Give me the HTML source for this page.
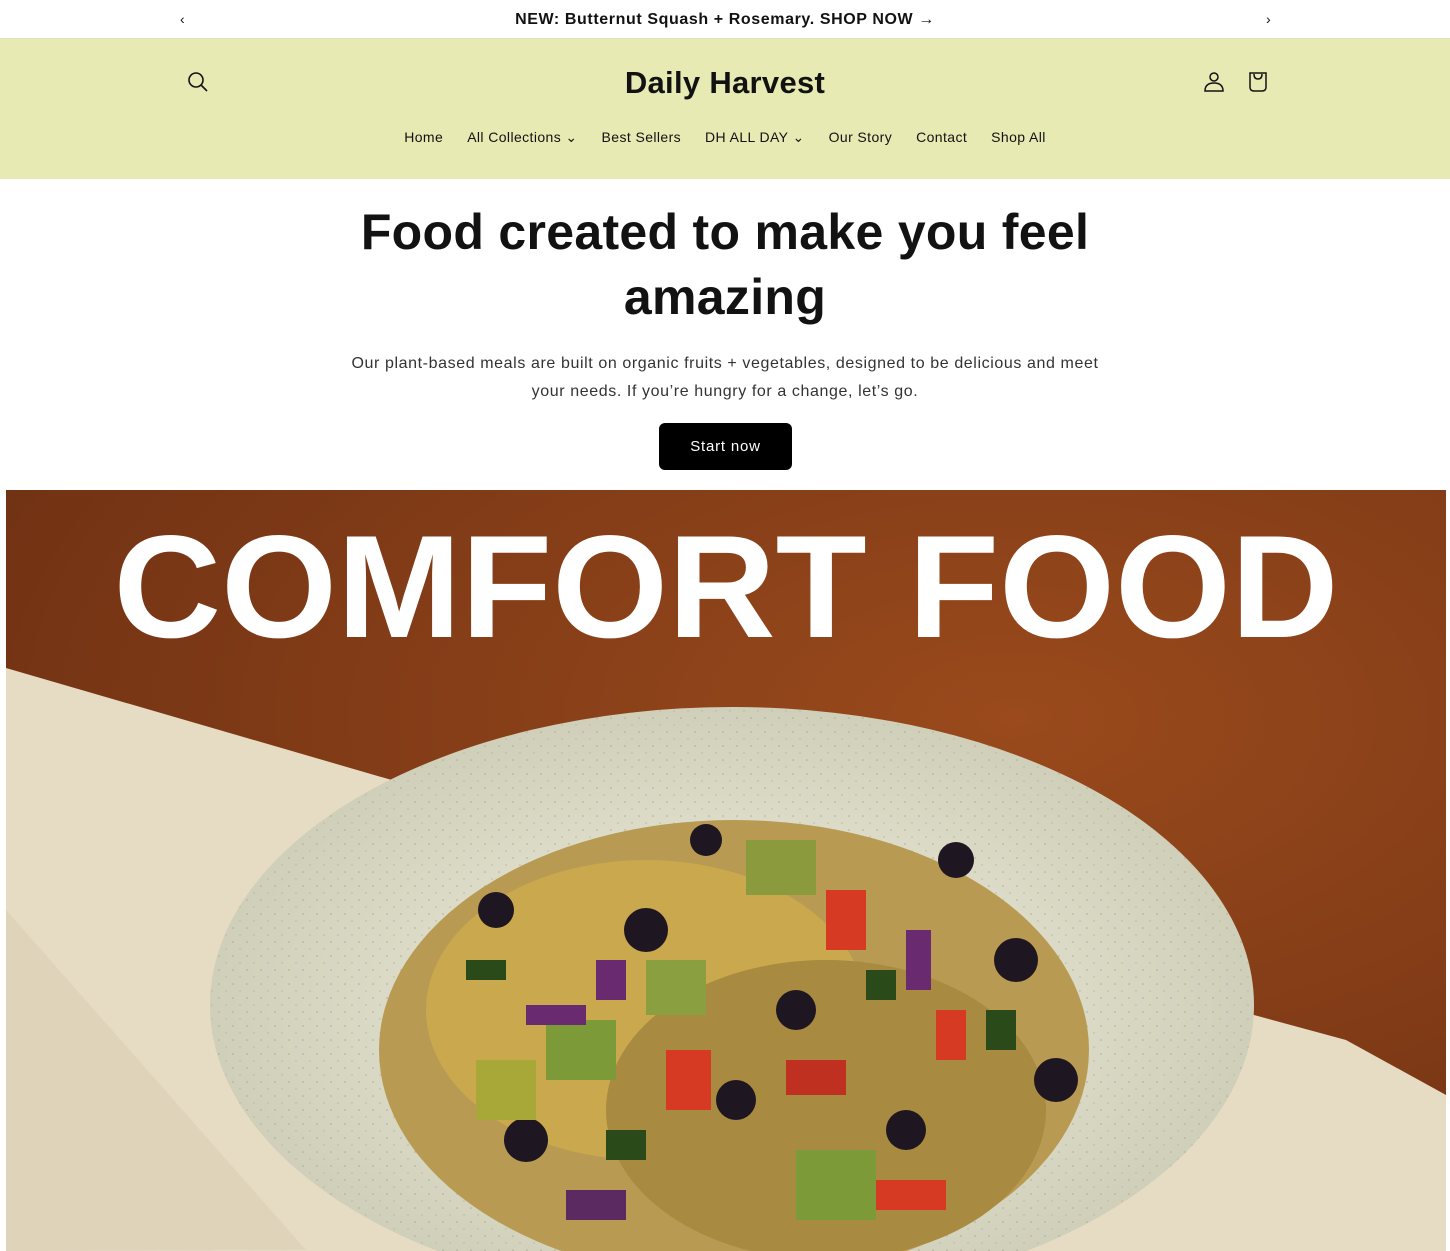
<!DOCTYPE html>
<html><head><meta charset="utf-8">
<style>
*{margin:0;padding:0;box-sizing:border-box}
body{width:1450px;height:1251px;overflow:hidden;background:#fff;font-family:"Liberation Sans",sans-serif;color:#121212}
.ann{height:39px;border-bottom:1px solid #e2e5c0;position:relative;text-align:center;font-size:16px;line-height:39px;font-weight:bold;letter-spacing:.6px}
.ann .l,.ann .r{position:absolute;top:0;font-size:14px;font-weight:normal}
.ann .l{left:180px}.ann .r{left:1266px}
header{background:#e7eab2;height:140px;position:relative}
.logo{position:absolute;top:26px;left:0;width:1450px;text-align:center;font-size:31px;font-weight:bold;letter-spacing:.3px}
nav{position:absolute;top:90px;left:0;width:1450px;text-align:center;font-size:14px;letter-spacing:.4px}
nav span{margin:0 12px}
.ic{position:absolute}
h1{text-align:center;font-size:50px;line-height:65px;font-weight:bold;margin-top:21px;letter-spacing:.3px}
p{text-align:center;font-size:16px;line-height:28px;color:#333;margin-top:20px;letter-spacing:.6px}
.btn{position:absolute;left:659px;top:423px;width:133px;height:47px;background:#000;color:#fff;border-radius:6px;text-align:center;line-height:47px;font-size:15px;letter-spacing:.8px}
.hero{position:absolute;left:6px;top:490px}
</style></head><body>
<div class="ann"><span class="l">&#8249;</span>NEW: Butternut Squash + Rosemary. SHOP NOW &#8594;<span class="r">&#8250;</span></div>
<header>
<svg class="ic" style="left:187px;top:32px" width="22" height="22" viewBox="0 0 22 22"><circle cx="9" cy="9" r="7" fill="none" stroke="#121212" stroke-width="1.6"/><line x1="14" y1="14" x2="20" y2="20" stroke="#121212" stroke-width="1.6"/></svg>
<div class="logo">Daily Harvest</div>
<svg class="ic" style="left:1203px;top:32px" width="22" height="22" viewBox="0 0 22 22"><circle cx="11" cy="6" r="4" fill="none" stroke="#121212" stroke-width="1.5"/><path d="M2 20 Q2 12 11 12 Q20 12 20 20 Z" fill="none" stroke="#121212" stroke-width="1.5"/></svg>
<svg class="ic" style="left:1247px;top:32px" width="22" height="22" viewBox="0 0 22 22"><path d="M3 2 H19 V16 Q19 20 15 20 H7 Q3 20 3 16 Z" fill="none" stroke="#121212" stroke-width="1.5"/><path d="M7 3 Q7 8 11 8 Q15 8 15 3" fill="none" stroke="#121212" stroke-width="1.5"/></svg>
<nav><span>Home</span><span>All Collections &#8964;</span><span>Best Sellers</span><span>DH ALL DAY &#8964;</span><span>Our Story</span><span>Contact</span><span>Shop All</span></nav>
</header>
<h1>Food created to make you feel<br>amazing</h1>
<p>Our plant-based meals are built on organic fruits + vegetables, designed to be delicious and meet<br>your needs. If you’re hungry for a change, let’s go.</p>
<div class="btn">Start now</div>
<svg class="hero" width="1440" height="761" viewBox="0 0 1440 761">
<defs>
<radialGradient id="br" cx="0.7" cy="0.3" r="0.9"><stop offset="0" stop-color="#9a4a1c"/><stop offset="1" stop-color="#6a2e12"/></radialGradient>
<radialGradient id="bw" cx="0.5" cy="0.5" r="0.5"><stop offset="0.6" stop-color="#dcdcc8"/><stop offset="1" stop-color="#cfcfba"/></radialGradient>
<pattern id="sp" width="14" height="14" patternUnits="userSpaceOnUse"><circle cx="3" cy="4" r="0.8" fill="#b0ab95"/><circle cx="10" cy="11" r="0.7" fill="#b8b39c"/></pattern>
</defs>
<rect width="1440" height="761" fill="url(#br)"/>
<polygon points="0,178 420,300 1340,550 1440,605 1440,761 0,761" fill="#e6dcc4"/>
<polygon points="0,420 300,760 0,761" fill="#d8ccb0" opacity=".5"/>
<ellipse cx="726" cy="515" rx="522" ry="298" fill="url(#bw)"/>
<ellipse cx="726" cy="515" rx="522" ry="298" fill="url(#sp)"/>
<ellipse cx="728" cy="560" rx="355" ry="230" fill="#b99a52"/>
<g>
<ellipse cx="640" cy="520" rx="220" ry="150" fill="#c9a84e"/>
<ellipse cx="820" cy="620" rx="220" ry="150" fill="#a88a40"/>
<circle cx="490" cy="420" r="18" fill="#1e1620"/><circle cx="640" cy="440" r="22" fill="#1e1620"/><circle cx="790" cy="520" r="20" fill="#1e1620"/><circle cx="950" cy="370" r="18" fill="#1e1620"/><circle cx="1010" cy="470" r="22" fill="#1e1620"/><circle cx="730" cy="610" r="20" fill="#1e1620"/><circle cx="520" cy="650" r="22" fill="#1e1620"/><circle cx="900" cy="640" r="20" fill="#1e1620"/><circle cx="1050" cy="590" r="22" fill="#1e1620"/><circle cx="700" cy="350" r="16" fill="#1e1620"/>
<rect x="740" y="350" width="70" height="55" fill="#8a9a3c"/><rect x="470" y="570" width="60" height="60" fill="#a8a838"/><rect x="540" y="530" width="70" height="60" fill="#7c9a38"/><rect x="790" y="660" width="80" height="70" fill="#7c9a38"/><rect x="640" y="470" width="60" height="55" fill="#8aa040"/>
<rect x="820" y="400" width="40" height="60" fill="#d63a22"/><rect x="660" y="560" width="45" height="60" fill="#d63a22"/><rect x="930" y="520" width="30" height="50" fill="#d63a22"/><rect x="870" y="690" width="70" height="30" fill="#d63a22"/><rect x="780" y="570" width="60" height="35" fill="#c03020"/>
<rect x="590" y="470" width="30" height="40" fill="#6a2a70"/><rect x="900" y="440" width="25" height="60" fill="#6a2a70"/><rect x="520" y="515" width="60" height="20" fill="#6a2a70"/><rect x="560" y="700" width="60" height="30" fill="#5a2a60"/>
<rect x="460" y="470" width="40" height="20" fill="#2a4a1a"/><rect x="980" y="520" width="30" height="40" fill="#2a4a1a"/><rect x="600" y="640" width="40" height="30" fill="#2a4a1a"/><rect x="860" y="480" width="30" height="30" fill="#2a4a1a"/>
</g>
<text x="720" y="147" text-anchor="middle" fill="#fff" font-family="Liberation Sans" font-weight="bold" font-size="146" textLength="1225" lengthAdjust="spacingAndGlyphs">COMFORT FOOD</text>
</svg>
</body></html>
